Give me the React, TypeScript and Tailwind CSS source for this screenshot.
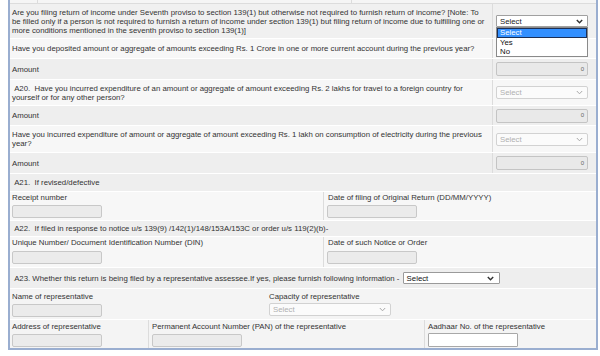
import React from "react";

const Chevron = ({ color = "#9a9a9a", sw = 1 }: { color?: string; sw?: number }) => (
  <svg width="7" height="5" viewBox="0 0 7 5">
    <path d="M0.8 1 L3.5 3.8 L6.2 1" fill="none" stroke={color} strokeWidth={sw} />
  </svg>
);

const DisabledInput = ({ className = "" }: { className?: string }) => (
  <div className={`h-[13px] w-[90px] rounded-[2px] border border-[#c8c8c8] bg-[#ebebeb] ${className}`} />
);

const AmountInput = () => (
  <div className="flex h-[14px] w-[92px] items-center justify-end rounded-[2px] border border-[#c4c4c4] bg-[#e9e9e9] pr-[3px] text-[6px] text-[#666]">
    0
  </div>
);

const DisabledSelect = ({ className = "w-[92px]" }: { className?: string }) => (
  <div
    className={`flex h-[13px] items-center justify-between rounded-[2px] border border-[#d2d2d2] bg-[#fbfbfb] pl-[3px] pr-[4px] text-[#b0b0b0] ${className}`}
  >
    <span>Select</span>
    <Chevron color="#a8a8a8" />
  </div>
);

const QRow = ({
  h,
  bg,
  children,
  right,
}: {
  h: string;
  bg: string;
  children: React.ReactNode;
  right?: React.ReactNode;
}) => (
  <div className={`flex border-b border-white ${h} ${bg}`}>
    <div className="flex min-w-0 flex-1 items-center pl-[2px]">
      <div className="whitespace-nowrap">{children}</div>
    </div>
    <div className="flex w-[104px] items-center border-l border-[#dcdcdc] pl-[3px]">{right}</div>
  </div>
);

export default function App() {
  return (
    <div className="h-[356px] w-[600px] overflow-hidden bg-white font-['Liberation_Sans',Arial,sans-serif] text-[7.8px] leading-[9px] text-[#333]">
      <div className="ml-[8px] w-[590px] border-x-2 border-b-2 border-[#9aaed0]">
        {/* cut-off row at the very top */}
        <div className="flex h-[4px] border-b border-[#dcdcdc] bg-[#f5f5f5]">
          <div className="w-[28px] border-r border-[#dcdcdc]" />
          <div className="w-[314px] border-r border-[#dcdcdc]" />
        </div>

        <QRow
          h="h-[35px]"
          bg="bg-[#f0f0f0]"
          right={
            <div className="relative w-[92px]">
              <div className="flex h-[12px] items-center justify-between rounded-[1px] border border-[#a0a0a0] bg-white pl-[3px] pr-[4px] text-[#222]">
                <span>Select</span>
                <Chevron color="#333" sw={1.4} />
              </div>
              <div className="absolute left-0 top-[12px] z-10 w-[92px] border border-[#8a8a8a] bg-white text-[#111]">
                <div className="h-[10px] border border-[#1c2f55] bg-[#3390ff] pl-[2px] leading-[8px] text-white">Select</div>
                <div className="h-[9px] pl-[3px]">Yes</div>
                <div className="h-[9px] pl-[3px]">No</div>
              </div>
            </div>
          }
        >
          Are you filing return of income under Seventh proviso to section 139(1) but otherwise not required to furnish return of income? [Note: To
          <br />
          be filled only if a person is not required to furnish a return of income under section 139(1) but filing return of income due to fulfilling one or
          <br />
          more conditions mentioned in the seventh proviso to section 139(1)]
        </QRow>

        <QRow h="h-[20px]" bg="bg-[#f7f7f7]">
          Have you deposited amount or aggregate of amounts exceeding Rs. 1 Crore in one or more current account during the previous year?
        </QRow>

        <QRow h="h-[21px]" bg="bg-[#eeeeee]" right={<AmountInput />}>
          Amount
        </QRow>

        <QRow h="h-[26px]" bg="bg-[#f7f7f7]" right={<DisabledSelect />}>
          {"\u00a0A20.\u00a0 Have you incurred expenditure of an amount or aggregate of amount exceeding Rs. 2 lakhs for travel to a foreign country for"}
          <br />
          yourself or for any other person?
        </QRow>

        <QRow h="h-[20px]" bg="bg-[#eeeeee]" right={<AmountInput />}>
          Amount
        </QRow>

        <QRow h="h-[27px]" bg="bg-[#f7f7f7]" right={<DisabledSelect />}>
          Have you incurred expenditure of amount or aggregate of amount exceeding Rs. 1 lakh on consumption of electricity during the previous
          <br />
          year?
        </QRow>

        <QRow h="h-[21px]" bg="bg-[#eeeeee]" right={<AmountInput />}>
          Amount
        </QRow>

        {/* A21 */}
        <div className="flex h-[18px] items-center border-b border-white bg-[#eeeeee] pl-[2px]">
          {"\u00a0A21.\u00a0 If revised/defective"}
        </div>
        <div className="flex h-[29px] border-b border-white bg-[#f7f7f7]">
          <div className="flex w-[313px] flex-col justify-end pb-[2px] pl-[2px]">
            <div className="mb-[3px]">Receipt number</div>
            <DisabledInput />
          </div>
          <div className="flex flex-1 flex-col justify-end border-l border-[#dcdcdc] pb-[2px] pl-[3px]">
            <div className="mb-[3px] pl-[1px]">Date of filing of Original Return (DD/MM/YYYY)</div>
            <DisabledInput />
          </div>
        </div>

        {/* A22 */}
        <div className="flex h-[16px] items-center border-b border-white bg-[#eeeeee] pl-[2px]">
          {"\u00a0A22.\u00a0 If filed in response to notice u/s 139(9) /142(1)/148/153A/153C or order u/s 119(2)(b)-"}
        </div>
        <div className="flex h-[31px] border-b border-white bg-[#f7f7f7]">
          <div className="flex w-[313px] flex-col justify-end pb-[3px] pl-[2px]">
            <div className="mb-[4px]">Unique Number/ Document Identification Number (DIN)</div>
            <DisabledInput />
          </div>
          <div className="flex flex-1 flex-col justify-end border-l border-[#dcdcdc] pb-[3px] pl-[3px]">
            <div className="mb-[4px] pl-[1px]">Date of such Notice or Order</div>
            <DisabledInput />
          </div>
        </div>

        {/* A23 */}
        <div className="flex h-[21px] items-center border-b border-white bg-[#eeeeee] pl-[2px]">
          <span className="whitespace-pre">{"\u00a0A23.\u00a0Whether this return is being filed by a representative assessee.If yes, please furnish following information - "}</span>
          <div className="ml-[1px] flex h-[12px] w-[97px] items-center justify-between rounded-[1px] border border-[#9a9a9a] bg-white pl-[3px] pr-[5px] text-[#111]">
            <span>Select</span>
            <Chevron color="#333" sw={1.4} />
          </div>
        </div>
        <div className="flex h-[31px] border-b border-white bg-[#f4f4f4]">
          <div className="flex w-[259px] flex-col justify-end pb-[2px] pl-[2px]">
            <div className="mb-[3px]">Name of representative</div>
            <DisabledInput />
          </div>
          <div className="flex flex-1 flex-col justify-end pb-[3px]">
            <div className="mb-[2px]">Capacity of representative</div>
            <DisabledSelect className="w-[122px]" />
          </div>
        </div>
        <div className="flex h-[28px] bg-[#f4f4f4]">
          <div className="flex w-[138px] flex-col justify-end pb-[1px] pl-[2px]">
            <div className="mb-[3px]">Address of representative</div>
            <DisabledInput />
          </div>
          <div className="flex w-[276px] flex-col justify-end border-l border-[#dcdcdc] pb-[1px] pl-[3px]">
            <div className="mb-[3px]">Permanent Account Number (PAN) of the representative</div>
            <DisabledInput />
          </div>
          <div className="flex flex-1 flex-col justify-end border-l border-[#dcdcdc] pb-[1px] pl-[3px]">
            <div className="mb-[2px]">Aadhaar No. of the representative</div>
            <div className="h-[14px] w-[90px] rounded-[1px] border border-[#a8a8a8] bg-white" />
          </div>
        </div>
      </div>
    </div>
  );
}
